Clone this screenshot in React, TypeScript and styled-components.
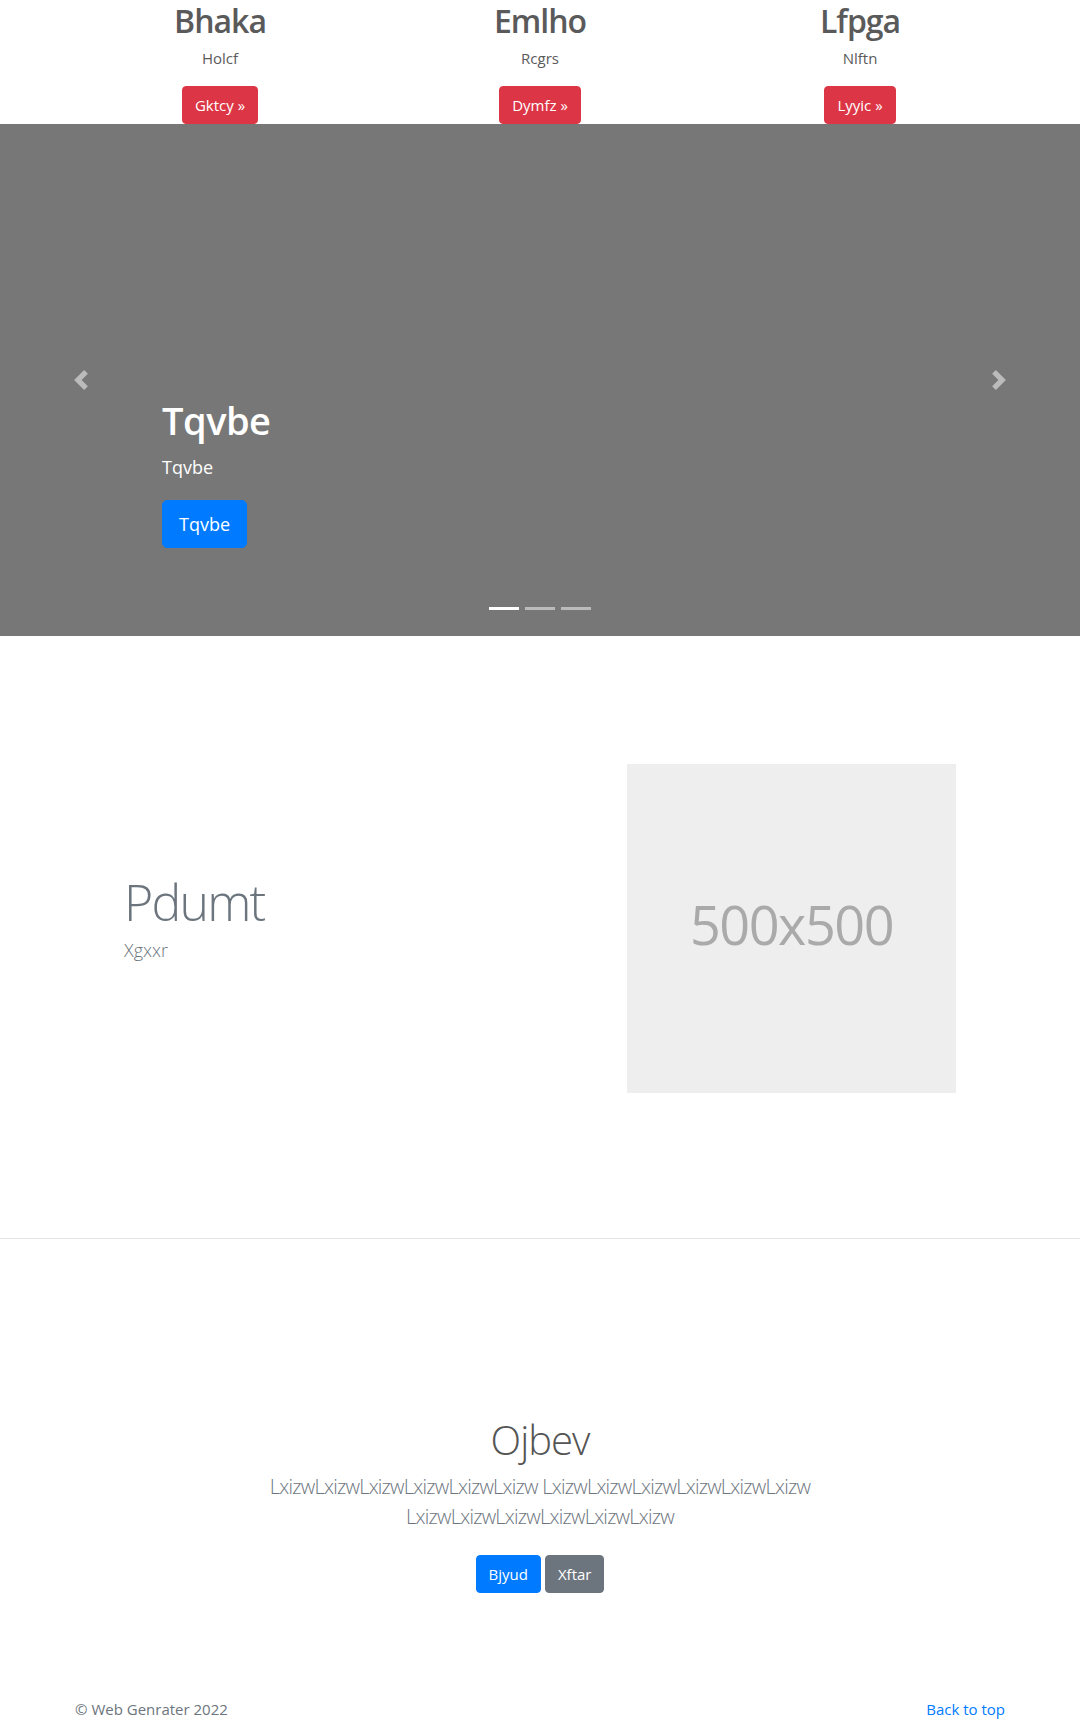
import React from 'react';
import styled, { createGlobalStyle } from 'styled-components';

const features = [
  { title: 'Bhaka', text: 'Holcf', button: 'Gktcy' },
  { title: 'Emlho', text: 'Rcgrs', button: 'Dymfz' },
  { title: 'Lfpga', text: 'Nlftn', button: 'Lyyic' },
];

const GlobalStyle = createGlobalStyle`
  body {
    margin: 0;
    font-family: "Open Sans", "Noto Sans", Arial, sans-serif;
    font-size: 16px;
    line-height: 1.5;
    color: #212529;
    background: #fff;
  }
  * {
    box-sizing: border-box;
  }
`;

const App: React.FC = () => {
  return (
    <>
      <GlobalStyle />
      <Container>
        <Marketing>
          {features.map((f) => (
            <Feature key={f.title}>
              <FeatureTitle>{f.title}</FeatureTitle>
              <FeatureText>{f.text}</FeatureText>
              <Button variant='danger'>{f.button} &raquo;</Button>
            </Feature>
          ))}
        </Marketing>
      </Container>

      <Carousel>
        <Control side='left'>
          <ChevronIcon viewBox='0 0 8 8'>
            <path d='M5.25 0l-4 4 4 4 1.5-1.5L4.25 4l2.5-2.5L5.25 0z' />
          </ChevronIcon>
        </Control>
        <Caption>
          <CaptionTitle>Tqvbe</CaptionTitle>
          <CaptionText>Tqvbe</CaptionText>
          <LargeButton>Tqvbe</LargeButton>
        </Caption>
        <Control side='right'>
          <ChevronIcon viewBox='0 0 8 8'>
            <path d='M2.75 0l-1.5 1.5L3.75 4l-2.5 2.5L2.75 8l4-4-4-4z' />
          </ChevronIcon>
        </Control>
        <Indicators>
          <Indicator active />
          <Indicator />
          <Indicator />
        </Indicators>
      </Carousel>

      <Featurette>
        <FeaturetteInner>
          <div>
            <FeaturetteHeading>Pdumt</FeaturetteHeading>
            <Lead>Xgxxr</Lead>
          </div>
          <Placeholder>500x500</Placeholder>
        </FeaturetteInner>
      </Featurette>

      <Divider />

      <Jumbotron>
        <NarrowContainer>
          <JumboHeading>Ojbev</JumboHeading>
          <JumboLead>
            LxizwLxizwLxizwLxizwLxizwLxizw LxizwLxizwLxizwLxizwLxizwLxizw
            LxizwLxizwLxizwLxizwLxizwLxizw
          </JumboLead>
          <ButtonRow>
            <Button variant='primary'>Bjyud</Button>
            <Button variant='secondary'>Xftar</Button>
          </ButtonRow>
        </NarrowContainer>
      </Jumbotron>

      <Footer>
        <FooterRow>
          <FooterText>© Web Genrater 2022</FooterText>
          <FooterLink href='#'>Back to top</FooterLink>
        </FooterRow>
      </Footer>
    </>
  );
};

export default App;

const buttonColors = {
  danger: '#dc3545',
  primary: '#007bff',
  secondary: '#6c757d',
};

const Container = styled.div`
  width: 930px;
  margin: 0 auto;
`;

const Marketing = styled.div`
  display: grid;
  grid-template-columns: repeat(3, 1fr);
  column-gap: 30px;
`;

const Feature = styled.div`
  display: flex;
  flex-direction: column;
  align-items: center;
  text-align: center;
  color: #5a5a5a;
`;

const FeatureTitle = styled.h2`
  margin: 0 0 6px;
  padding-top: 2px;
  font-size: 32px;
  font-weight: 600;
  line-height: 1.2;
  letter-spacing: -1px;
`;

const FeatureText = styled.p`
  margin: 0 12px 16px;
  font-size: 15px;
  line-height: 24px;
`;

const Button = styled.a<{ variant: keyof typeof buttonColors }>`
  display: inline-block;
  padding: 6px 12px;
  font-size: 15px;
  line-height: 24px;
  color: #fff;
  background: ${(p) => buttonColors[p.variant]};
  border: 1px solid ${(p) => buttonColors[p.variant]};
  border-radius: 4px;
  text-decoration: none;
  cursor: pointer;
`;

const Carousel = styled.div`
  position: relative;
  height: 512px;
  background: #777;
  overflow: hidden;
`;

const Control = styled.div<{ side: 'left' | 'right' }>`
  position: absolute;
  top: 0;
  bottom: 0;
  ${(p) => p.side}: 0;
  width: 15%;
  display: flex;
  align-items: center;
  justify-content: center;
  opacity: 0.5;
`;

const ChevronIcon = styled.svg`
  width: 20px;
  height: 20px;
  fill: #fff;
`;

const Caption = styled.div`
  position: absolute;
  left: 15%;
  right: 15%;
  bottom: 88px;
  display: flex;
  flex-direction: column;
  align-items: flex-start;
  color: #fff;
  z-index: 10;
`;

const CaptionTitle = styled.h1`
  margin: 0 0 8px;
  font-size: 38px;
  font-weight: 600;
  line-height: 48px;
  letter-spacing: -0.5px;
`;

const CaptionText = styled.p`
  margin: 0 0 18px;
  font-size: 18px;
  line-height: 30px;
`;

const LargeButton = styled.a`
  display: inline-block;
  padding: 8px 16px;
  font-size: 18px;
  line-height: 30px;
  color: #fff;
  background: #007bff;
  border: 1px solid #007bff;
  border-radius: 5px;
`;

const Indicators = styled.ol`
  position: absolute;
  left: 0;
  right: 0;
  bottom: 0;
  margin: 0 0 16px;
  padding: 0;
  list-style: none;
  display: flex;
  justify-content: center;
`;

const Indicator = styled.li<{ active?: boolean }>`
  width: 30px;
  height: 3px;
  margin: 10px 3px;
  background: #fff;
  opacity: ${(p) => (p.active ? 1 : 0.5)};
`;

const Featurette = styled.section`
  padding: 128px 0 145px;
`;

const FeaturetteInner = styled.div`
  width: 930px;
  margin: 0 auto;
  padding: 0 49px;
  display: grid;
  grid-template-columns: 1fr 329px;
  align-items: center;
`;

const FeaturetteHeading = styled.h2`
  margin: 0 0 8px;
  font-size: 50px;
  font-weight: 300;
  line-height: 1;
  letter-spacing: -1.8px;
  color: #6c757d;
`;

const Lead = styled.p`
  margin: 0 0 16px;
  font-size: 18px;
  font-weight: 300;
  line-height: 30px;
  color: #6c757d;
`;

const Placeholder = styled.div`
  width: 329px;
  height: 329px;
  padding-bottom: 8px;
  background: #eee;
  color: #aaa;
  display: flex;
  align-items: center;
  justify-content: center;
  font-size: 54px;
  letter-spacing: -1.5px;
`;

const Divider = styled.hr`
  margin: 0;
  border: 0;
  border-top: 1px solid rgba(0, 0, 0, 0.1);
`;

const Jumbotron = styled.section`
  padding: 177px 0 48px;
  text-align: center;
`;

const NarrowContainer = styled.div`
  width: 610px;
  margin: 0 auto;
`;

const JumboHeading = styled.h1`
  margin: 0 0 8px;
  font-size: 40px;
  font-weight: 300;
  line-height: 48px;
  color: #555;
  letter-spacing: -1px;
`;

const JumboLead = styled.p`
  margin: 0 0 16px;
  font-size: 20px;
  font-weight: 300;
  line-height: 30px;
  color: #6c757d;
  letter-spacing: -0.75px;
`;

const ButtonRow = styled.div`
  display: flex;
  justify-content: center;
  gap: 4px;
  margin: 23px 0 8px;
`;

const Footer = styled.footer`
  padding-top: 49px;
  padding-bottom: 48px;
  color: #6c757d;
`;

const FooterRow = styled.div`
  width: 930px;
  margin: 0 auto;
  display: flex;
  justify-content: space-between;
`;

const FooterText = styled.p`
  margin: 0 0 16px;
  font-size: 15px;
`;

const FooterLink = styled.a`
  color: #007bff;
  text-decoration: none;
  font-size: 15px;
`;
